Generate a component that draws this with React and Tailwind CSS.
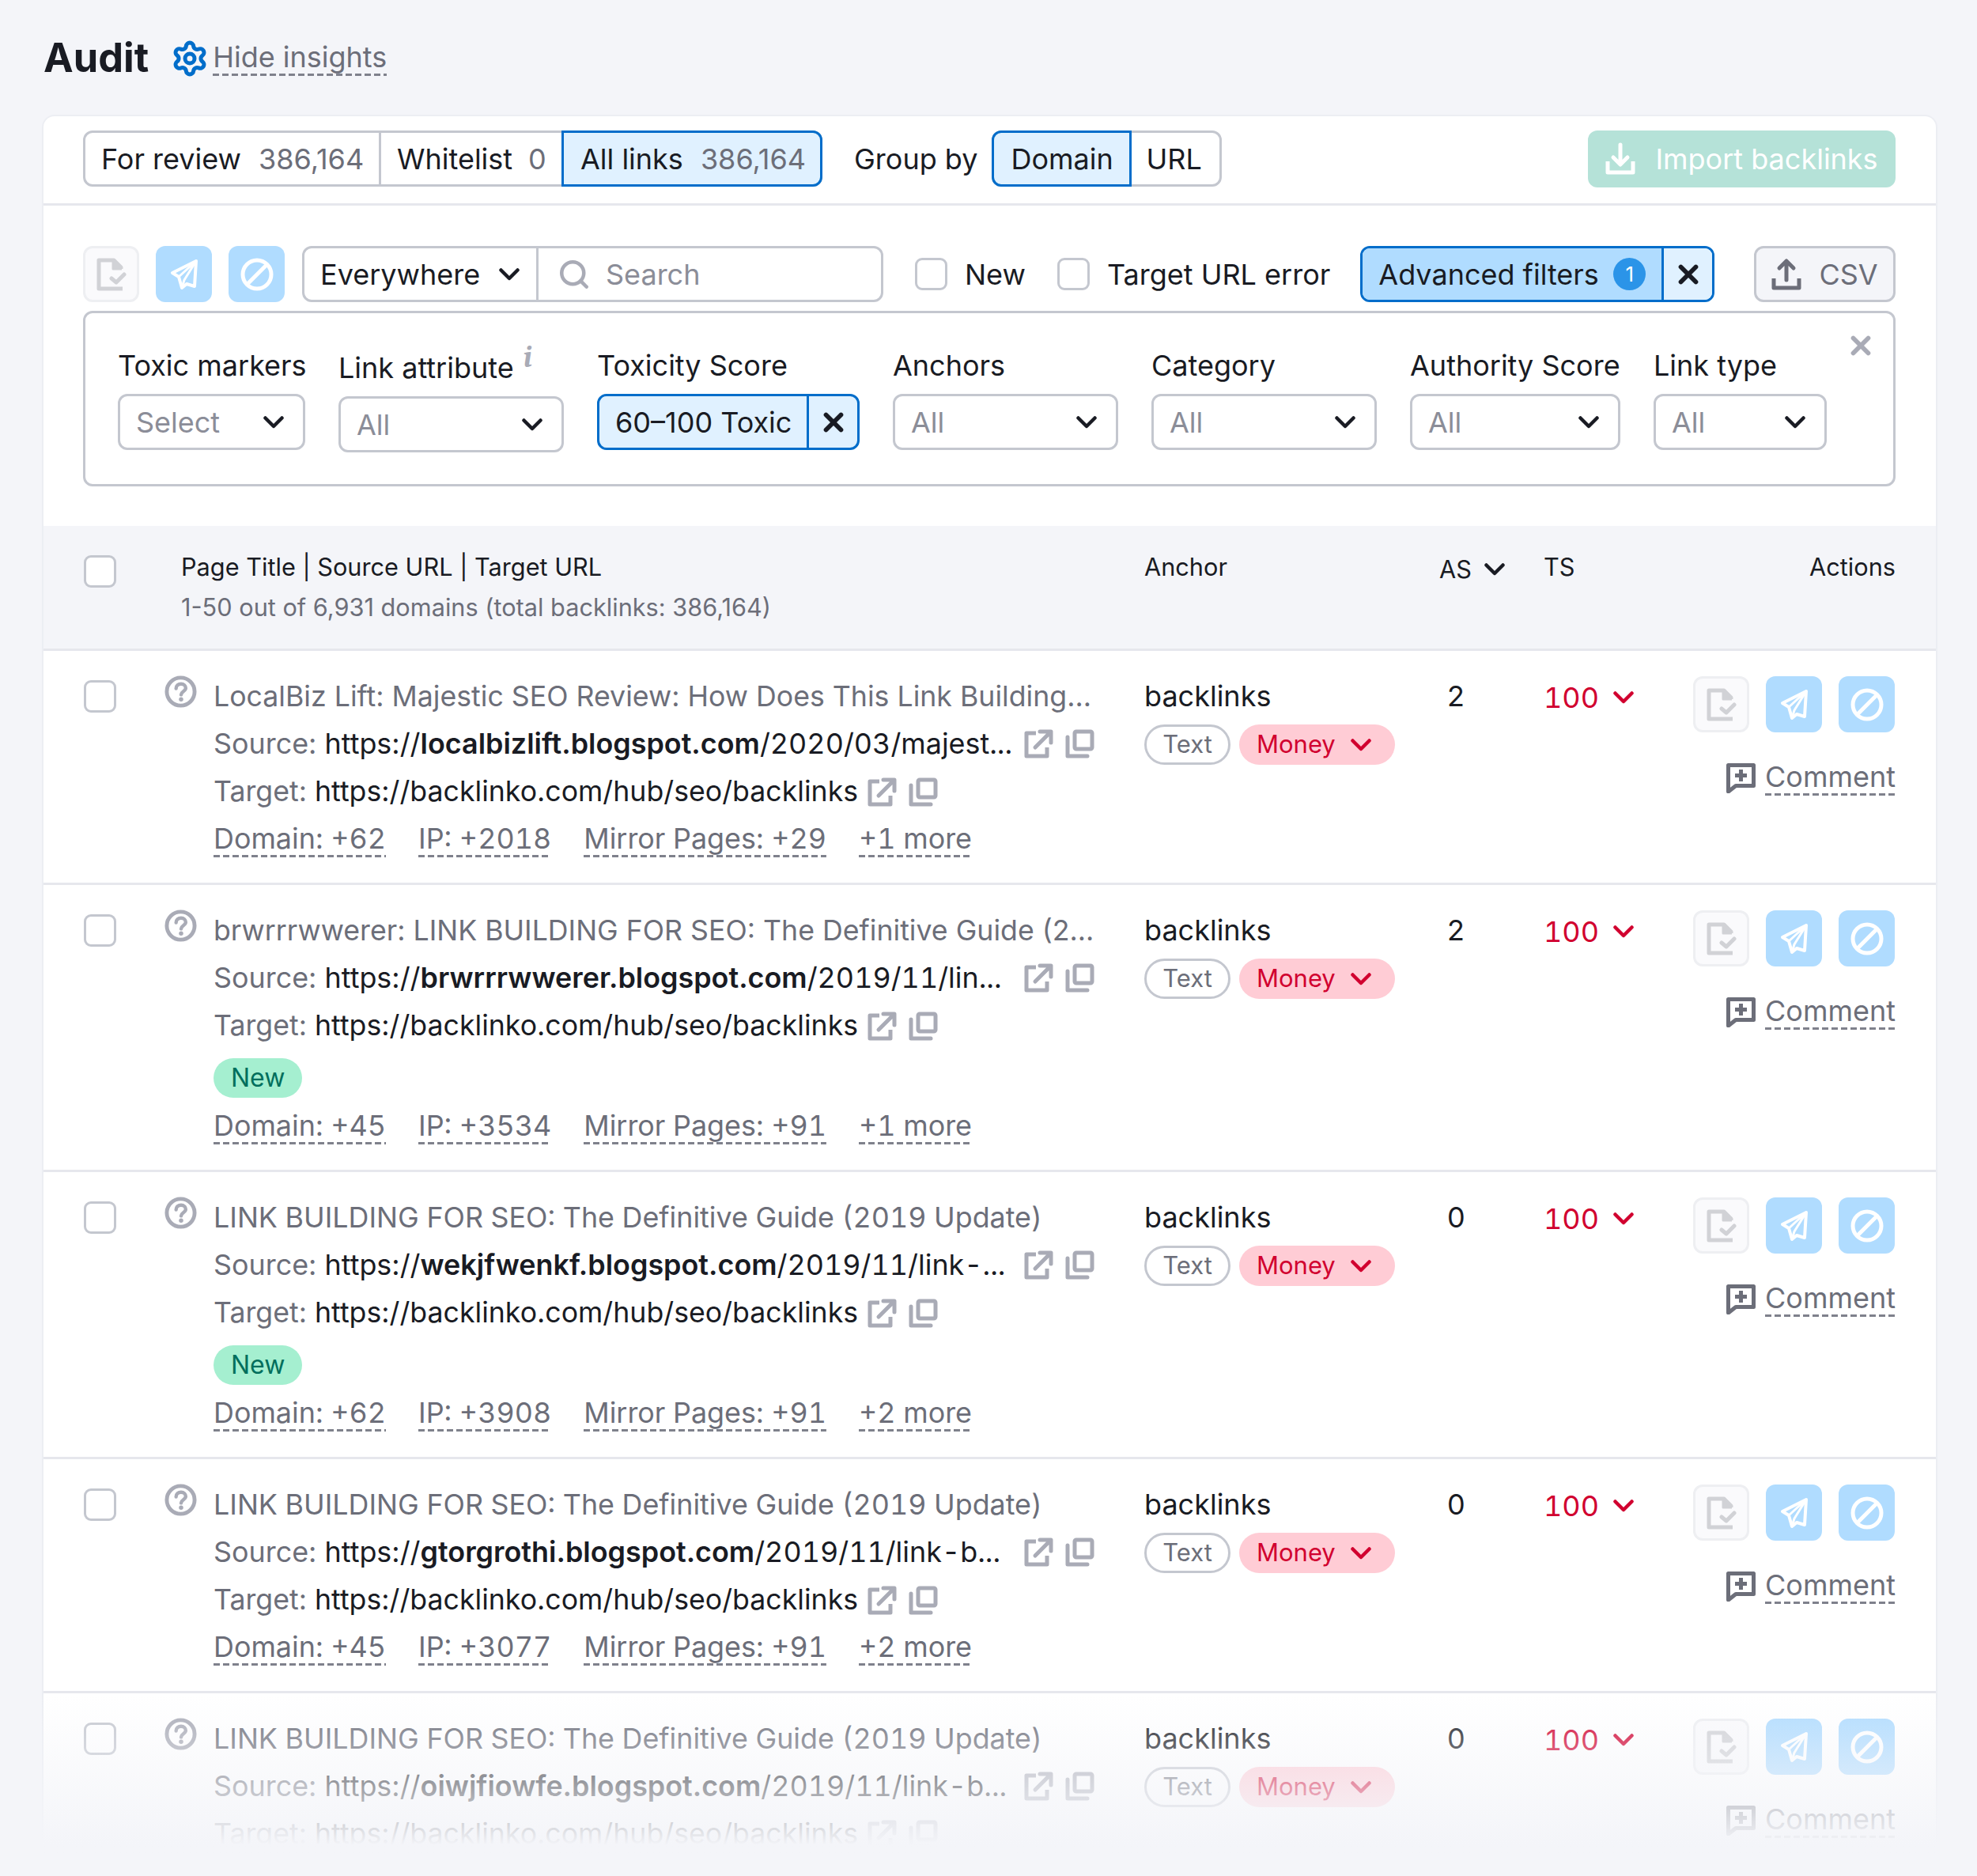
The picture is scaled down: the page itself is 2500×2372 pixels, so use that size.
import { Settings, Search, X } from "lucide-react";

const rows = [
  {
    title: "LocalBiz Lift: Majestic SEO Review: How Does This Link Building...",
    domain: "localbizlift.blogspot.com",
    path: "/2020/03/majest...",
    as: "2",
    meta: ["Domain: +62", "IP: +2018", "Mirror Pages: +29", "+1 more"],
  },
  {
    title: "brwrrrwwerer: LINK BUILDING FOR SEO: The Definitive Guide (2...",
    domain: "brwrrrwwerer.blogspot.com",
    path: "/2019/11/lin...",
    as: "2",
    isNew: true,
    meta: ["Domain: +45", "IP: +3534", "Mirror Pages: +91", "+1 more"],
  },
  {
    title: "LINK BUILDING FOR SEO: The Definitive Guide (2019 Update)",
    wideTitle: true,
    domain: "wekjfwenkf.blogspot.com",
    path: "/2019/11/link-...",
    as: "0",
    isNew: true,
    meta: ["Domain: +62", "IP: +3908", "Mirror Pages: +91", "+2 more"],
  },
  {
    title: "LINK BUILDING FOR SEO: The Definitive Guide (2019 Update)",
    wideTitle: true,
    domain: "gtorgrothi.blogspot.com",
    path: "/2019/11/link-b...",
    as: "0",
    meta: ["Domain: +45", "IP: +3077", "Mirror Pages: +91", "+2 more"],
  },
  {
    title: "LINK BUILDING FOR SEO: The Definitive Guide (2019 Update)",
    wideTitle: true,
    domain: "oiwjfiowfe.blogspot.com",
    path: "/2019/11/link-b...",
    as: "0",
    meta: [],
  },
];

const filters = [
  { label: "Toxic markers", value: "Select", width: "w-[237px]" },
  { label: "Link attribute", value: "All", width: "w-[285px]", info: true },
  { label: "Toxicity Score", active: true, width: "w-[332px]" },
  { label: "Anchors", value: "All", width: "w-[285px]" },
  { label: "Category", value: "All", width: "w-[285px]" },
  { label: "Authority Score", value: "All", width: "w-[266px]" },
  { label: "Link type", value: "All", width: "w-[219px]" },
];

function Chevron({ className = "text-[#191b23]" }) {
  return (
    <svg viewBox="0 0 26 16" fill="none" className={`w-[26px] h-[16px] shrink-0 ${className}`}>
      <path d="M2.500 2.500L13 13L23.500 2.500" stroke="currentColor" strokeWidth="4.500" strokeLinecap="round" strokeLinejoin="round" />
    </svg>
  );
}

function DocIcon() {
  return (
    <svg viewBox="0 0 38 42" fill="none" className="w-[38px] h-[42px]">
      <path d="M31 14V12L22 3H3V39H33" stroke="#d1d2d6" strokeWidth="5" strokeLinejoin="round" />
      <path d="M21 3V14H32" fill="#d1d2d6" stroke="#d1d2d6" strokeWidth="3" strokeLinejoin="round" />
      <path d="M19 26L25 31L35 21" stroke="#d1d2d6" strokeWidth="5" strokeLinecap="round" strokeLinejoin="round" />
    </svg>
  );
}

function PlaneIcon() {
  return (
    <svg viewBox="0 0 36 40" fill="none" className="w-[36px] h-[40px]">
      <path d="M33 3L3 18L11 23L15 37L21 32L31 35Z" stroke="#fff" strokeWidth="4" strokeLinejoin="round" />
      <path d="M33 3L11 23M33 3L18 27L15 37" stroke="#fff" strokeWidth="3" strokeLinejoin="round" />
    </svg>
  );
}

function BanIcon() {
  return (
    <svg viewBox="0 0 42 42" fill="none" className="w-[42px] h-[42px]">
      <circle cx="21" cy="21" r="18" stroke="#fff" strokeWidth="5" />
      <path d="M9 33L33 9" stroke="#fff" strokeWidth="5" />
    </svg>
  );
}

function ExternalIcon() {
  return (
    <svg viewBox="0 0 37 37" fill="none" className="w-[37px] h-[37px] shrink-0">
      <path d="M15 5H3V34H29V23" stroke="#a9abb6" strokeWidth="5" strokeLinejoin="round" />
      <path d="M14 23L33 4M20 3H34V17" stroke="#a9abb6" strokeWidth="5" strokeLinecap="round" strokeLinejoin="round" />
    </svg>
  );
}

function CopyIcon() {
  return (
    <svg viewBox="0 0 37 37" fill="none" className="w-[37px] h-[37px] shrink-0">
      <rect x="12" y="3" width="22" height="22" rx="2" stroke="#a9abb6" strokeWidth="5" />
      <path d="M3 10V34H28" stroke="#a9abb6" strokeWidth="5" strokeLinecap="round" strokeLinejoin="round" />
    </svg>
  );
}

function Dashed({ children, className = "" }) {
  return (
    <span
      className={`inline-block leading-[42px] pb-[3px] bg-no-repeat bg-bottom bg-[length:100%_3px] bg-[repeating-linear-gradient(90deg,#7f818c_0,#7f818c_8px,transparent_8px,transparent_12px)] ${className}`}
    >
      {children}
    </span>
  );
}

function ActionButtons() {
  return (
    <div className="flex gap-[21px]">
      <div className="w-[71px] h-[71px] rounded-[12px] border-[3px] border-[#eeeff2] bg-[#fafafc] flex items-center justify-center">
        <DocIcon />
      </div>
      <div className="w-[71px] h-[71px] rounded-[12px] bg-[#b0dcff] flex items-center justify-center">
        <PlaneIcon />
      </div>
      <div className="w-[71px] h-[71px] rounded-[12px] bg-[#b0dcff] flex items-center justify-center">
        <BanIcon />
      </div>
    </div>
  );
}

function Row({ row }) {
  return (
    <div className="flex pl-[51px] pr-[52px] pt-[27px] pb-[24px] border-b-[3px] border-[#e6e7ed]">
      <div className="w-[102px] shrink-0 pt-[10px]">
        <div className="w-[41px] h-[41px] rounded-[9px] border-[3px] border-[#c4c7cf] bg-white" />
      </div>
      <div className="w-[62px] shrink-0 pt-[4px]">
        <svg viewBox="0 0 42 42" fill="none" className="w-[41px] h-[41px]">
          <circle cx="21" cy="21" r="18" stroke="#a9abb6" strokeWidth="5" />
          <path d="M15 17C15 13 18 11 21.500 11C25 11 27.500 13.500 27.500 16.500C27.500 20.500 22 20.500 21.500 25" stroke="#a9abb6" strokeWidth="4.500" strokeLinecap="round" />
          <circle cx="21.500" cy="31" r="2.800" fill="#a9abb6" />
        </svg>
      </div>
      <div className="w-[1177px] shrink-0 text-[35.900px] text-[#6c6e79]">
        <div className={`h-[60px] leading-[60px] whitespace-nowrap ${row.wideTitle ? "text-[35.850px] tabular-nums" : "text-[35.700px]"}`}>{row.title}</div>
        <div className="h-[61px] flex items-center">
          <div className="w-[1025px] whitespace-nowrap">
            Source: <span className="text-[#191b23]">https://<b className="font-semibold">{row.domain}</b><span className="tabular-nums">{row.path}</span></span>
          </div>
          <ExternalIcon />
          <span className="w-[15px]" />
          <CopyIcon />
        </div>
        <div className="h-[60px] flex items-center text-[35.700px]">
          <span className="whitespace-nowrap">
            Target: <span className="text-[#191b23]">https://backlinko.com/hub/seo/backlinks</span>
          </span>
          <span className="w-[12px]" />
          <ExternalIcon />
          <span className="w-[15px]" />
          <CopyIcon />
        </div>
        {row.isNew && (
          <div className="h-[67px] pt-[4px] flex items-center">
            <span className="h-[50px] px-[22px] rounded-full bg-[#a5efd0] text-[#006e5c] text-[32px] flex items-center">New</span>
          </div>
        )}
        {row.meta.length > 0 && (
          <div className="h-[61px] flex items-center gap-[41px] tabular-nums">
            {row.meta.map((m) => (
              <Dashed key={m}>{m}</Dashed>
            ))}
          </div>
        )}
      </div>
      <div className="w-[373px] shrink-0 text-[36px] text-[#191b23]">
        <div className="h-[60px] leading-[60px]">backlinks</div>
        <div className="flex gap-[11px] mt-[6px] text-[31px]">
          <span className="h-[51px] w-[109px] rounded-full border-[3px] border-[#c4c7cf] text-[#6c6e79] flex items-center justify-center">Text</span>
          <span className="h-[51px] w-[197px] pl-[22px] rounded-full bg-[#ffccd5] text-[#d1002f] flex items-center gap-[19px]">
            Money
            <Chevron className="text-[#d1002f]" />
          </span>
        </div>
      </div>
      <div className="w-[132px] shrink-0 text-[36px] text-[#191b23] leading-[60px] pl-[10px]">{row.as}</div>
      <div className="flex-1 flex">
        <div className="flex items-center gap-[18px] h-[60px] text-[36px] text-[#d1002f] mt-[2px] tabular-nums">
          100
          <Chevron className="text-[#d1002f]" />
        </div>
        <div className="flex-1 flex flex-col items-end pt-[5px]">
          <ActionButtons />
          <div className="flex items-center gap-[12px] mt-[35px] -mr-[1px] text-[36px] text-[#6c6e79]">
            <svg viewBox="0 0 37 38" fill="none" className="w-[37px] h-[38px]">
              <path d="M2.500 2.500H34.500V28.500H12L2.500 36Z" stroke="#6c6e79" strokeWidth="5" strokeLinejoin="round" />
              <path d="M18.500 8V23M11 15.500H26" stroke="#6c6e79" strokeWidth="5" />
            </svg>
            <Dashed>Comment</Dashed>
          </div>
        </div>
      </div>
    </div>
  );
}

export default function App() {
  return (
    <div className="bg-[#f4f5f9] min-h-[2372px] h-[2372px] overflow-hidden font-[Inter,sans-serif] text-[#191b23]">
      {/* Title */}
      <div className="h-[145px] pl-[55px] pt-[41px] flex items-start">
        <h1 className="text-[50.500px] leading-[64px] font-bold">Audit</h1>
        <Settings className="ml-[28px] mt-[9px] w-[48px] h-[48px] text-[#006dca]" strokeWidth={2.5} />
        <Dashed className="ml-[5px] mt-[10px] text-[36px] text-[#6c6e79]">Hide insights</Dashed>
      </div>

      {/* Card */}
      <div className="relative ml-[53px] w-[2397px] h-[2205px]">
        <div className="h-full overflow-hidden bg-white rounded-t-[16px] border-t-2 border-x-2 border-[#eceef3]">
          {/* Tabs */}
          <div className="h-[113px] pt-[18px] pl-[50px] pr-[51px] flex items-start border-b-[3px] border-[#e6e7ed] text-[36px]">
            <div className="flex h-[71px] w-[935px] rounded-[12px] border-[3px] border-[#c4c7cf]">
              <div className="w-[371px] pl-[20px] flex items-center gap-[22px]">For review <span className="text-[#6c6e79]">386,164</span></div>
              <div className="w-[231px] pl-[20px] border-l-[3px] border-[#c4c7cf] flex items-center gap-[20px]">Whitelist <span className="text-[#6c6e79]">0</span></div>
              <div className="flex-1 -my-[3px] -mr-[3px] pl-[21px] border-[3px] border-[#006dca] rounded-r-[12px] bg-[#e0f1ff] flex items-center gap-[22px]">All links <span className="text-[#6c6e79]">386,164</span></div>
            </div>
            <div className="ml-[40px] h-[71px] flex items-center">Group by</div>
            <div className="ml-[18px] flex h-[71px] w-[291px] rounded-[12px] border-[3px] border-[#c4c7cf]">
              <div className="w-[177px] -m-[3px] pl-[21px] border-[3px] border-[#006dca] rounded-l-[12px] bg-[#e0f1ff] flex items-center">Domain</div>
              <div className="flex-1 pl-[21px] flex items-center">URL</div>
            </div>
            <div className="ml-auto w-[389px] h-[72px] rounded-[12px] bg-[#b5e2d8] text-white flex items-center justify-center gap-[25px]">
              <svg viewBox="0 0 38 42" fill="none" className="w-[38px] h-[42px]">
                <path d="M19 3V27M10 19L19 28L28 19" stroke="#fff" strokeWidth="5" strokeLinecap="round" strokeLinejoin="round" />
                <path d="M3 24V38H35V24" stroke="#fff" strokeWidth="5" strokeLinejoin="round" />
              </svg>
              Import backlinks
            </div>
          </div>

          <div className="pl-[50px] pr-[51px] pt-[51px]">
            {/* Toolbar */}
            <div className="flex items-center h-[71px] text-[36px]">
              <div className="w-[71px] h-[71px] rounded-[12px] border-[3px] border-[#eeeff2] bg-[#fafafc] flex items-center justify-center">
                <DocIcon />
              </div>
              <div className="ml-[21px] w-[71px] h-[71px] rounded-[12px] bg-[#b0dcff] flex items-center justify-center">
                <PlaneIcon />
              </div>
              <div className="ml-[21px] w-[71px] h-[71px] rounded-[12px] bg-[#b0dcff] flex items-center justify-center">
                <BanIcon />
              </div>
              <div className="ml-[22px] w-[735px] h-[71px] flex rounded-[12px] border-[3px] border-[#c4c7cf]">
                <div className="w-[296px] pl-[20px] pr-[21px] border-r-[3px] border-[#c4c7cf] flex items-center justify-between">
                  Everywhere
                  <Chevron />
                </div>
                <div className="flex-1 pl-[24px] flex items-center gap-[19px] text-[#8b8d98]">
                  <Search className="w-[42px] h-[42px] text-[#a9abb6]" strokeWidth={2.6} />
                  Search
                </div>
              </div>
              <div className="ml-[40px] w-[41px] h-[41px] rounded-[9px] border-[3px] border-[#c4c7cf]" />
              <span className="ml-[22px]">New</span>
              <div className="ml-[40px] w-[41px] h-[41px] rounded-[9px] border-[3px] border-[#c4c7cf]" />
              <span className="ml-[22px] whitespace-nowrap">Target URL error</span>
              <div className="ml-[38px] w-[448px] h-[71px] flex rounded-[12px] border-[3px] border-[#006dca] overflow-hidden">
                <div className="flex-1 bg-[#b0dcff] pl-[20px] pr-[20px] flex items-center justify-between border-r-[3px] border-[#006dca]">
                  Advanced filters
                  <span className="w-[41px] h-[41px] rounded-full bg-[#2b94e8] text-white text-[26px] flex items-center justify-center">1</span>
                </div>
                <div className="w-[61px] bg-[#e0f1ff] flex items-center justify-center">
                  <X className="w-[38px] h-[38px] text-[#191b23]" strokeWidth={3.6} />
                </div>
              </div>
              <div className="ml-auto w-[179px] h-[71px] rounded-[12px] border-[3px] border-[#c4c7cf] bg-[#f4f5f9] text-[#6c6e79] flex items-center justify-center gap-[22px]">
                <svg viewBox="0 0 38 42" fill="none" className="w-[38px] h-[42px]">
                  <path d="M19 28V5M10 13L19 4L28 13" stroke="#6c6e79" strokeWidth="5" strokeLinecap="round" strokeLinejoin="round" />
                  <path d="M3 26V38H35V26" stroke="#6c6e79" strokeWidth="5" strokeLinejoin="round" />
                </svg>
                CSV
              </div>
            </div>

            {/* Advanced filters */}
            <div className="relative mt-[11px] h-[222px] rounded-[12px] border-[3px] border-[#c4c7cf] pl-[41px] pt-[41px] flex gap-[42px] text-[36px]">
              {filters.map((f) => (
                <div key={f.label} className={`${f.width} shrink-0 ${f.info ? "pt-[3px]" : ""}`}>
                  <div className="h-[50px] leading-[50px] whitespace-nowrap">
                    {f.label}
                    {f.info && <span className="relative -top-[14px] ml-[12px] italic font-serif font-bold text-[38px] text-[#a9abb6]">i</span>}
                  </div>
                  {f.active ? (
                    <div className="mt-[11px] h-[71px] flex rounded-[12px] border-[3px] border-[#006dca] bg-[#e0f1ff]">
                      <div className="flex-1 pl-[20px] border-r-[3px] border-[#006dca] flex items-center whitespace-nowrap">60–100 Toxic</div>
                      <div className="w-[61px] flex items-center justify-center">
                        <X className="w-[38px] h-[38px]" strokeWidth={3.6} />
                      </div>
                    </div>
                  ) : (
                    <div className="mt-[11px] h-[71px] rounded-[12px] border-[3px] border-[#c4c7cf] pl-[20px] pr-[24px] flex items-center justify-between text-[#8b8d98]">
                      {f.value}
                      <Chevron />
                    </div>
                  )}
                </div>
              ))}
              <X className="absolute right-[22px] top-[22px] w-[38px] h-[38px] text-[#a9abb6]" strokeWidth={3.6} />
            </div>
          </div>

          {/* Table header */}
          <div className="mt-[50px] h-[158px] flex pl-[51px] pr-[51px] bg-[#f4f5f9] border-b-[3px] border-[#e6e7ed] text-[30.700px]">
            <div className="w-[123px] shrink-0 pt-[37px]">
              <div className="w-[41px] h-[41px] rounded-[9px] border-[3px] border-[#c4c7cf] bg-white" />
            </div>
            <div className="w-[1218px] shrink-0 pt-[27px]">
              <div className="h-[51px] leading-[50px]">Page Title | Source URL | Target URL</div>
              <div className="h-[50px] leading-[50px] text-[#6c6e79]">1-50 out of 6,931 domains (total backlinks: 386,164)</div>
            </div>
            <div className="w-[373px] shrink-0 pt-[27px] leading-[50px]">Anchor</div>
            <div className="w-[132px] shrink-0 pt-[30px] leading-[50px] flex items-center gap-[16px] h-[80px]">
              AS
              <Chevron />
            </div>
            <div className="flex-1 pt-[27px] leading-[50px] flex justify-between">
              <span>TS</span>
              <span>Actions</span>
            </div>
          </div>

          {/* Rows */}
          {rows.map((row, i) => (
            <Row key={i} row={row} />
          ))}
        </div>

        {/* Fade out over the last row */}
        <div className="absolute left-0 right-0 bottom-0 h-[208px] bg-gradient-to-b from-[#f4f5f9]/0 via-[#f4f5f9] via-[92%] to-[#f4f5f9]" />
      </div>
    </div>
  );
}
